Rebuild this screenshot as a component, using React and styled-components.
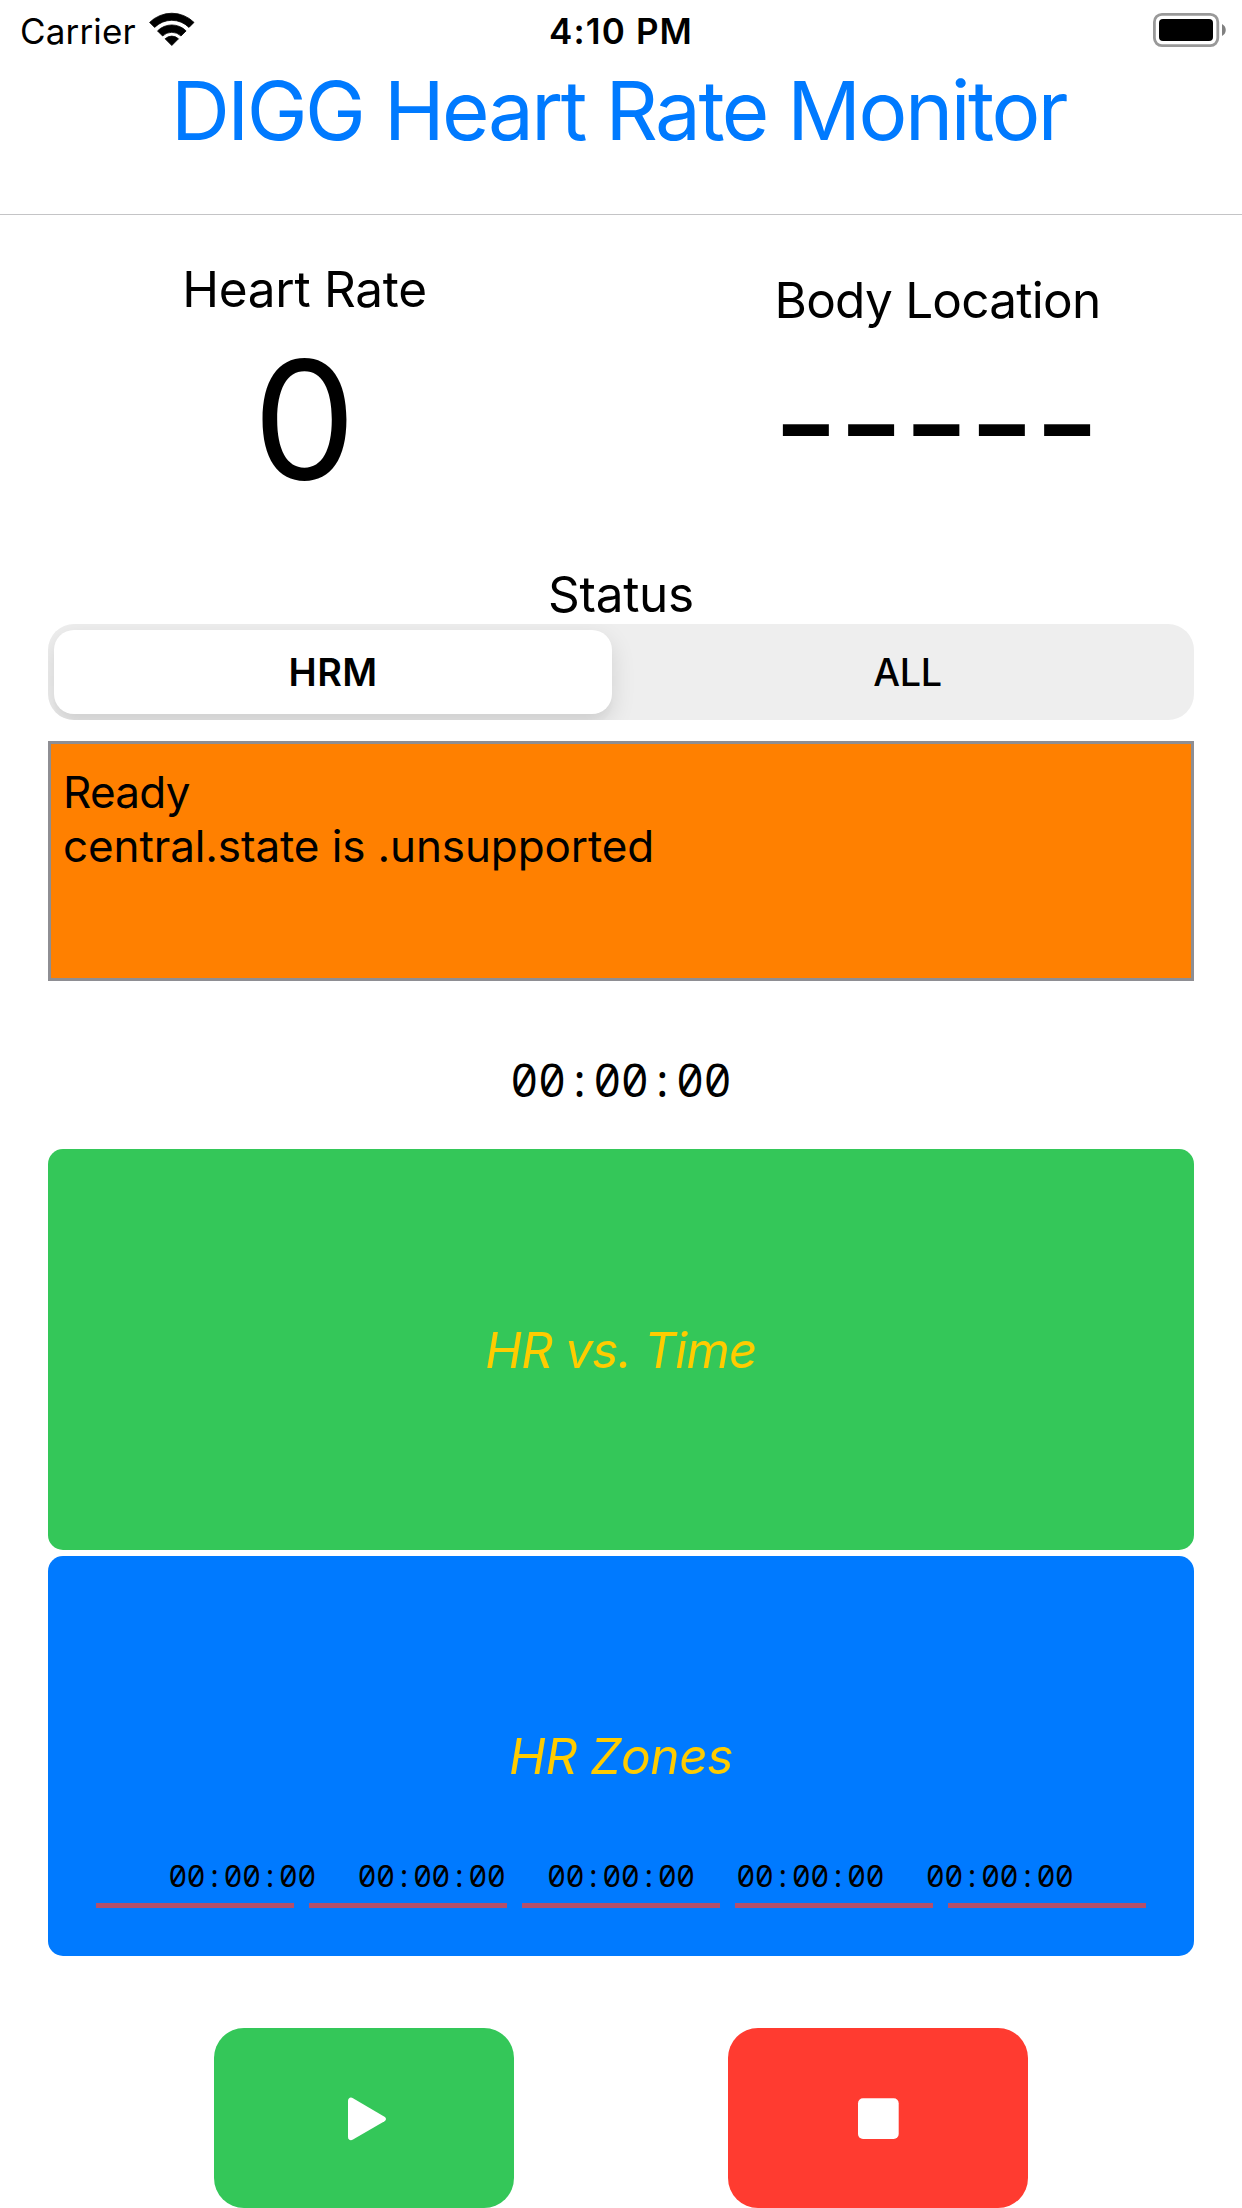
import React, { useState } from "react";
import styled, { createGlobalStyle } from "styled-components";

const color = {
  blue: "#007aff",
  green: "#34c759",
  red: "#ff3b30",
  yellow: "#ffcc00",
  orange: "#ff8000",
  gray: "#8e8e93",
};

const GlobalStyle = createGlobalStyle`
  *, *::before, *::after { box-sizing: border-box; }
  body {
    margin: 0;
    background: #fff;
    color: #000;
    font-family: Inter, "Liberation Sans", sans-serif;
  }
`;

const Screen = styled.div`
  display: flex;
  flex-direction: column;
  width: 1242px;
  height: 2208px;
  overflow: hidden;
  background: #fff;
`;

const StatusBar = styled.div`
  display: grid;
  grid-template-columns: 1fr auto 1fr;
  align-items: center;
  height: 63px;
  padding: 0 15px 0 20px;
  font-size: 35px;
  line-height: 42px;
`;

const CarrierGroup = styled.div`
  display: flex;
  align-items: center;
  gap: 12px;
`;

const Carrier = styled.span`
  margin-bottom: 2px;
  letter-spacing: 0.15px;
`;

const WifiGlyph = styled.svg`
  width: 48px;
  height: 35px;
  margin-bottom: 4px;
`;

const Clock = styled.time`
  margin: 0 0 2px -5px;
  font-weight: 600;
  letter-spacing: 1.15px;
`;

const BatteryGlyph = styled.svg`
  justify-self: end;
  width: 74px;
  height: 34px;
  margin-bottom: 3px;
`;

const Header = styled.header`
  height: 152px;
  border-bottom: 1px solid #c4c4c6;
  text-align: center;
`;

const Title = styled.h1`
  margin: 0;
  padding-right: 5px;
  color: ${color.blue};
  font-size: 81.6px;
  font-weight: 400;
  line-height: 95px;
  letter-spacing: -2.49px;
`;

const Content = styled.main`
  display: flex;
  flex-direction: column;
  padding: 0 48px;
`;

const Metrics = styled.section`
  display: grid;
  grid-template-columns: 513px 513px;
  justify-content: space-between;
  height: 349px;
`;

const Metric = styled.div`
  display: flex;
  flex-direction: column;
  align-items: center;
  padding-top: ${(p) => p.$top}px;
`;

const Caption = styled.div`
  font-size: 49.5px;
  line-height: 60px;
  letter-spacing: ${(p) => p.$tracking}px;
`;

const RateValue = styled.div`
  margin-top: 1px;
  font-size: 164px;
  font-weight: 440;
  line-height: 200px;
`;

const LocationValue = styled.div`
  margin: 7px 3px 0 0;
  font-size: 144px;
  line-height: 172px;
  letter-spacing: -0.95px;
  white-space: nowrap;
`;

const StatusCaption = styled(Caption)`
  text-align: center;
`;

const Segmented = styled.div`
  display: flex;
  gap: 15px;
  height: 96px;
  padding: 6px;
  border-radius: 26px;
  background: #eeeeee;
  overflow: hidden;
`;

const Segment = styled.button`
  flex: ${(p) => (p.$selected ? "0 0 558px" : "1 1 0")};
  padding: 0;
  border: 0;
  border-radius: 20px;
  background: ${(p) => (p.$selected ? "#fff" : "transparent")};
  box-shadow: ${(p) => (p.$selected ? "0 9px 24px rgba(0, 0, 0, 0.12), 0 9px 3px rgba(0, 0, 0, 0.02)" : "none")};
  color: #000;
  font-family: inherit;
  font-size: 37.8px;
  font-weight: ${(p) => (p.$selected ? 580 : 500)};
  letter-spacing: ${(p) => (p.$selected ? 0.4 : -0.3)}px;
  line-height: 84px;
`;

const Log = styled.div`
  height: 240px;
  margin-top: 21px;
  padding: 21px 12px;
  border: 3px solid ${color.gray};
  background: ${color.orange};
  font-size: 44px;
  line-height: 54px;
`;

const LogLine = styled.div`
  letter-spacing: ${(p) => p.$tracking}px;
`;

const Timer = styled.div`
  height: 168px;
  padding-top: 68px;
  font-family: "Noto Sans Mono", "DejaVu Sans Mono", monospace;
  font-size: 46px;
  line-height: 60px;
  text-align: center;
`;

const Panels = styled.div`
  display: grid;
  grid-template-rows: 401px 400px;
  gap: 6px;
`;

const Panel = styled.section`
  display: grid;
  border-radius: 15px;
  background: ${(p) => p.$fill};
`;

const PanelLabel = styled.div`
  grid-area: 1 / 1;
  place-self: center;
  color: ${color.yellow};
  font-size: 49.5px;
  font-style: italic;
  line-height: 60px;
  letter-spacing: ${(p) => p.$tracking}px;
`;

const ZoneFooter = styled.div`
  grid-area: 1 / 1;
  align-self: end;
  display: flex;
  flex-direction: column;
  gap: 8px;
  padding: 0 48px 48px;
`;

const ZoneTimes = styled.div`
  display: grid;
  grid-template-columns: repeat(5, 189.4px);
  justify-content: center;
  font-family: "Noto Sans Mono", "DejaVu Sans Mono", monospace;
  font-size: 31px;
  line-height: 40px;
  letter-spacing: -0.15px;
  text-align: center;
`;

const ZoneBars = styled.div`
  display: grid;
  grid-template-columns: repeat(5, 1fr);
  gap: 15px;
`;

const ZoneBar = styled.div`
  height: 5px;
  background: #b3506c;
`;

const Controls = styled.div`
  display: flex;
  justify-content: center;
  gap: 214px;
  margin-top: 72px;
`;

const ControlButton = styled.button`
  display: flex;
  align-items: center;
  justify-content: center;
  width: 300px;
  height: 180px;
  padding: 0;
  border: 0;
  border-radius: 30px;
  background: ${(p) => p.$fill};
`;

const ControlGlyph = styled.svg`
  width: 60px;
  height: 60px;
  fill: #fff;
`;

const Wifi = () => (
  <WifiGlyph viewBox="0 0 48 35" stroke="#000" strokeWidth="0.8" strokeLinejoin="round">
    <path d="M1.6 10.4A31.5 31.5 0 0 1 46 10.4L41 15.4A24.4 24.4 0 0 0 6.6 15.4Z" />
    <path d="M9.5 18.9A20.2 20.2 0 0 1 38.1 18.9L33 24A13.2 13.2 0 0 0 14.6 24Z" />
    <path d="M17.1 26.8A9.7 9.7 0 0 1 30.5 26.8L23.8 33.5Z" />
  </WifiGlyph>
);

const Battery = () => (
  <BatteryGlyph viewBox="0 0 74 34">
    <rect x="1.4" y="1.4" width="63.4" height="31.2" rx="7.5" fill="none" stroke="#999" strokeWidth="2.8" />
    <rect x="6" y="6" width="54" height="22" rx="4" />
    <path d="M69 11C74 13.5 74 20.5 69 23Z" fill="#808080" />
  </BatteryGlyph>
);

const segments = ["HRM", "ALL"];
const zones = ["00:00:00", "00:00:00", "00:00:00", "00:00:00", "00:00:00"];

export default function App() {
  const [selected, setSelected] = useState("HRM");

  return (
    <Screen>
      <GlobalStyle />
      <StatusBar>
        <CarrierGroup>
          <Carrier>Carrier</Carrier>
          <Wifi />
        </CarrierGroup>
        <Clock>4:10 PM</Clock>
        <Battery />
      </StatusBar>

      <Header>
        <Title>DIGG Heart Rate Monitor</Title>
      </Header>

      <Content>
        <Metrics>
          <Metric $top={44}>
            <Caption $tracking={-0.29}>Heart Rate</Caption>
            <RateValue>0</RateValue>
          </Metric>
          <Metric $top={55}>
            <Caption $tracking={-0.75}>Body Location</Caption>
            <LocationValue>-----</LocationValue>
          </Metric>
        </Metrics>

        <StatusCaption $tracking={-0.3}>Status</StatusCaption>
        <Segmented>
          {segments.map((name) => (
            <Segment key={name} $selected={name === selected} onClick={() => setSelected(name)}>
              {name}
            </Segment>
          ))}
        </Segmented>

        <Log>
          <LogLine $tracking={-0.7}>Ready</LogLine>
          <LogLine $tracking={-0.12}>central.state is .unsupported</LogLine>
        </Log>

        <Timer>00:00:00</Timer>

        <Panels>
          <Panel $fill={color.green}>
            <PanelLabel $tracking={-0.83}>HR vs. Time</PanelLabel>
          </Panel>
          <Panel $fill={color.blue}>
            <PanelLabel $tracking={-0.44}>HR Zones</PanelLabel>
            <ZoneFooter>
              <ZoneTimes>
                {zones.map((time, i) => (
                  <span key={i}>{time}</span>
                ))}
              </ZoneTimes>
              <ZoneBars>
                {zones.map((_, i) => (
                  <ZoneBar key={i} />
                ))}
              </ZoneBars>
            </ZoneFooter>
          </Panel>
        </Panels>

        <Controls>
          <ControlButton $fill={color.green} aria-label="Start">
            <ControlGlyph viewBox="0 0 60 60">
              <path d="M14 13C14 10 16.500 8.800 19 10.200L50.500 28.700C52.500 30 52.500 32 50.500 33.300L19 51.600C16.500 53 14 51.800 14 49Z" />
            </ControlGlyph>
          </ControlButton>
          <ControlButton $fill={color.red} aria-label="Stop">
            <ControlGlyph viewBox="0 0 60 60">
              <rect x="10" y="10.300" width="40.700" height="40.700" rx="5" />
            </ControlGlyph>
          </ControlButton>
        </Controls>
      </Content>
    </Screen>
  );
}
